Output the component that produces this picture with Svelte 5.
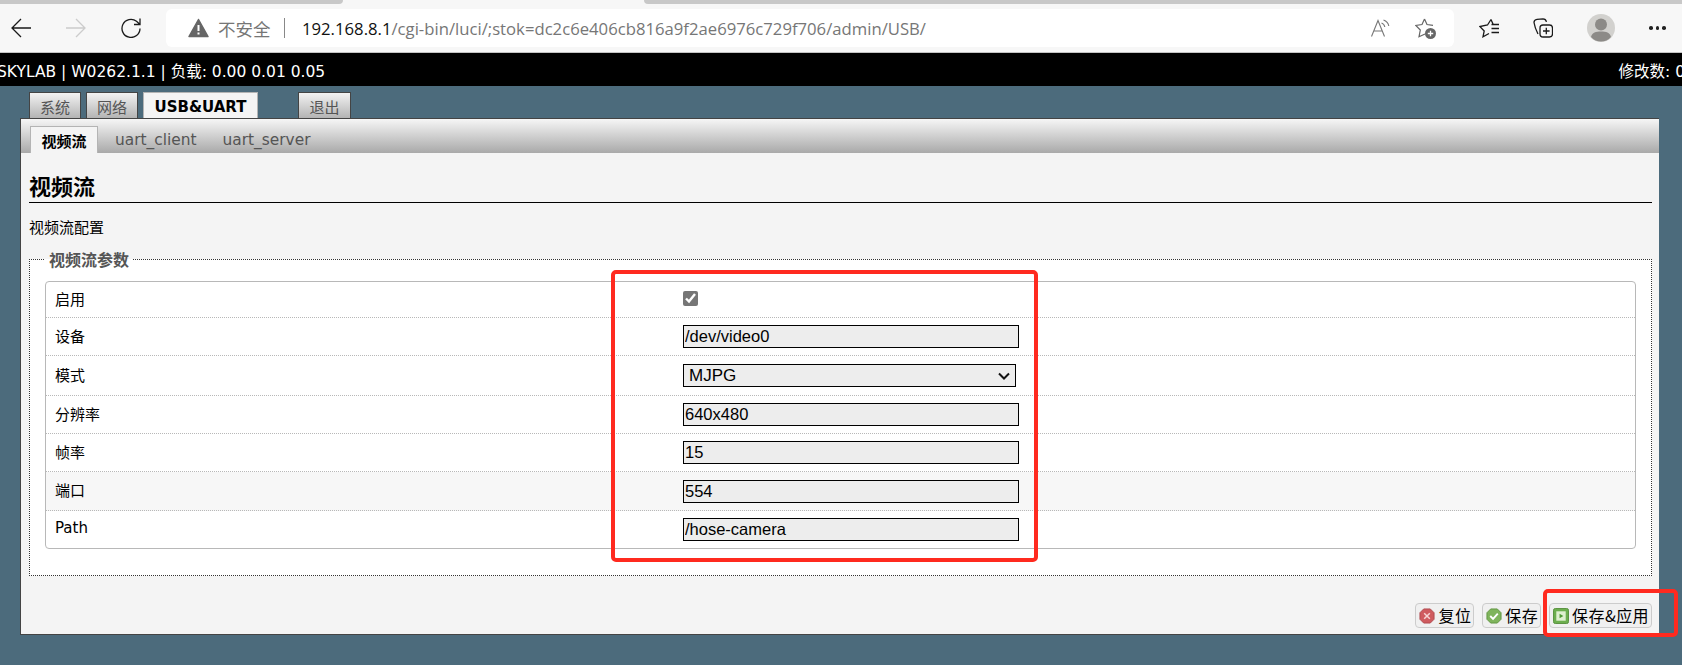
<script>
  const rows = [
    { label: '启用', type: 'check' },
    { label: '设备', type: 'text', value: '/dev/video0' },
    { label: '模式', type: 'select', value: 'MJPG' },
    { label: '分辨率', type: 'text', value: '640x480' },
    { label: '帧率', type: 'text', value: '15' },
    { label: '端口', type: 'text', value: '554' },
    { label: 'Path', type: 'text', value: '/hose-camera' }
  ];
</script>

<div class="page">
  <div class="strip">
    <div class="strip-a"></div>
    <div class="strip-b"></div>
    <div class="strip-c"></div>
  </div>

  <div class="toolbar">
    <div class="nav">
      <svg width="20" height="20" viewBox="0 0 20 20" fill="none" stroke="#1a1a1a" stroke-width="1.300"><path d="M20 10H1M10 1l-9 9 9 9" /></svg>
      <svg width="20" height="20" viewBox="0 0 20 20" fill="none" stroke="#cccccc" stroke-width="1.300"><path d="M0 10h19M10 1l9 9-9 9" /></svg>
      <svg width="20" height="20" viewBox="0 0 20 20" fill="none" stroke="#1a1a1a" stroke-width="1.300"><path d="M19 10.500a9 9 0 1 1-3.500-7.200l3 2.700M19 .5V6.500H13" /></svg>
    </div>
    <div class="address">
      <svg class="warn" width="21" height="20" viewBox="0 0 21 20"><path d="M10.500 1.500 20 18.500H1Z" fill="#666" stroke="#666" stroke-width="1.500" stroke-linejoin="round" /><path d="M10.500 7v6M10.500 14.500v2" stroke="#fff" stroke-width="2" /></svg>
      <span class="insecure">不安全</span>
      <span class="sep"></span>
      <span class="url"><b>192.168.8.1</b>/cgi-bin/luci/;stok=dc2c6e406cb816a9f2ae6976c729f706/admin/USB/</span>
      <svg class="read" width="19" height="18" viewBox="0 0 19 18" fill="none" stroke="#777" stroke-width="1.100"><path d="M.5 17.500 7 1.500l6.500 16M2.800 12h8.400M10.500 4c1.800.6 3 2 3.300 4M12.500 1c2.800 1 4.800 3 5.300 6" /></svg>
      <svg class="fav" width="22" height="21" viewBox="0 0 22 21"><path d="M9.500 1l2.500 5.500 6 .8M9.500 1 7 6.500.8 7.500l4.500 4.500L4 18.800l6-2.800" fill="none" stroke="#666" stroke-width="1.200" /><circle cx="15.500" cy="15.500" r="5.500" fill="#666" /><path d="M12.800 15.500h5.400M15.500 12.800v5.400" stroke="#fff" stroke-width="1.300" /></svg>
    </div>
    <div class="tools">
      <svg width="20" height="20" viewBox="0 0 20 20" fill="none" stroke="#1a1a1a" stroke-width="1.300"><path d="M12 1.500l2 4.500M12 1.500 8.500 7 .8 8.500 5.200 13 4 18.800 10 15.500M12.500 6.500h7.500M12.500 10.500h7.500M12.500 14.500h7.500" /></svg>
      <svg width="20" height="20" viewBox="0 0 20 20" fill="none" stroke="#1a1a1a" stroke-width="1.300"><path d="M5 16C3 12 1.500 8 1 4.500 1 2.500 2 1.500 4 1.300L10 .8c2 0 3 1 3.500 3" /><rect x="7" y="7" width="12.500" height="12" rx="3" /><path d="M13.300 9.700v6.600M10 13h6.600" /></svg>
      <svg width="28" height="28" viewBox="0 0 28 28"><circle cx="14" cy="14" r="14" fill="#d2d1ce" /><circle cx="14" cy="10.500" r="6" fill="#8c8a87" /><path d="M4 23c1-4.500 5-5.500 10-5.500S23 18.500 24 23c-5 6-15 6-20 0Z" fill="#8c8a87" /></svg>
      <span class="dots"><i></i><i></i><i></i></span>
    </div>
  </div>

  <header class="topbar">
    <span class="brand">SKYLAB | W0262.1.1 | 负载: 0.00 0.01 0.05</span>
    <span class="changes">修改数: 0</span>
  </header>

  <nav class="tabs">
    <a href="#a">系统</a>
    <a href="#a">网络</a>
    <a href="#a" class="active">USB&amp;UART</a>
    <a href="#a" class="logout">退出</a>
  </nav>

  <main class="panel">
    <div class="subtabs">
      <a href="#a" class="active">视频流</a>
      <a href="#a">uart_client</a>
      <a href="#a">uart_server</a>
    </div>

    <div class="content">
      <h2>视频流</h2>
      <p class="desc">视频流配置</p>

      <fieldset>
        <legend>视频流参数</legend>
        <div class="table">
          {#each rows as row, i}
            <div class="row" class:alt={i === 5}>
              <span class="label">{row.label}</span>
              {#if row.type === 'check'}
                <input type="checkbox" checked />
              {:else if row.type === 'select'}
                <select><option>{row.value}</option></select>
              {:else}
                <input type="text" value={row.value} />
              {/if}
            </div>
          {/each}
        </div>
      </fieldset>

      <div class="actions">
        <button>
          <svg width="16" height="16" viewBox="0 0 17 17"><path d="M5 1h7l4 4v7l-4 4H5l-4-4V5Z" fill="#cf5b5f" stroke="#b04a4e" /><path d="M5.500 5.500l6 6M11.500 5.500l-6 6" stroke="#f6d5d5" stroke-width="1.600" /></svg>
          复位
        </button>
        <button>
          <svg width="16" height="16" viewBox="0 0 17 17"><path d="M5 1h7l4 4v7l-4 4H5l-4-4V5Z" fill="#7fb45c" stroke="#5f9440" /><path d="M4.500 8.500l3 3 5-5.500" fill="none" stroke="#fff" stroke-width="2" /></svg>
          保存
        </button>
        <button>
          <svg width="16" height="16" viewBox="0 0 17 17"><rect x=".5" y=".5" width="16" height="16" rx="2" fill="#6cae4e" stroke="#558f3b" /><rect x="3.500" y="3.500" width="10" height="10" fill="#dff0d0" /><path d="M7 6l4 2.500L7 11Z" fill="#4f9a35" /></svg>
          保存&amp;应用
        </button>
      </div>
    </div>
  </main>

  <div class="mark mark-form"></div>
  <div class="mark mark-apply"></div>
</div>

<style>
  :global(body) {
    margin: 0;
    background: #4c6b7c;
  }

  .page {
    position: relative;
    height: 665px;
    overflow: hidden;
    background: #4c6b7c;
    font-family: "DejaVu Sans", "Noto Sans CJK SC", sans-serif;
    font-size: 14px;
  }

  a {
    text-decoration: none;
  }

  .strip {
    display: flex;
    height: 4px;
    background: #f7f7f7;
  }

  .strip-a {
    width: 343px;
    background: #c8c8c8;
    border-bottom-right-radius: 4px;
  }

  .strip-b {
    width: 301px;
    background: #f7f7f7;
  }

  .strip-c {
    flex: 1;
    background: #c8c8c8;
    border-bottom-left-radius: 4px;
  }

  .toolbar {
    display: flex;
    align-items: center;
    height: 48px;
    background: #f7f7f7;
    border-bottom: 1px solid #c4c4c4;
  }

  .nav {
    display: flex;
    align-items: center;
    gap: 35px;
    width: 166px;
    padding-left: 11px;
    box-sizing: border-box;
  }

  .address {
    display: flex;
    align-items: center;
    width: 1288px;
    height: 38px;
    background: #fff;
    border-radius: 6px;
    padding-left: 22px;
    box-sizing: border-box;
    font-family: "Open Sans", "Noto Sans CJK SC", sans-serif;
    font-size: 16.7px;
    color: #767676;
    white-space: nowrap;
  }

  .insecure {
    margin-left: 9px;
    font-size: 17.5px;
  }

  .sep {
    width: 1.5px;
    height: 20px;
    background: #888;
    margin: 0 17px 0 13px;
  }

  .url b {
    font-weight: 400;
    color: #111;
  }

  .read {
    margin-left: auto;
  }

  .fav {
    margin: 0 17px 0 25px;
  }

  .tools {
    display: flex;
    align-items: center;
    flex: 1;
    padding-left: 25px;
    gap: 34px;
  }

  .dots {
    display: flex;
    gap: 3px;
  }

  .dots i {
    width: 3.5px;
    height: 3.5px;
    border-radius: 50%;
    background: #222;
  }

  .topbar {
    display: flex;
    justify-content: space-between;
    align-items: center;
    height: 33px;
    background: #000;
    color: #fff;
    font-size: 15.5px;
    white-space: nowrap;
  }

  .brand {
    margin-left: -3px;
  }

  .changes {
    margin-right: -3px;
  }

  .tabs {
    display: flex;
    align-items: flex-end;
    gap: 5px;
    height: 26px;
    padding: 6px 0 0 29px;
    font-size: 15px;
  }

  .tabs a {
    height: 26px;
    width: 52px;
    box-sizing: border-box;
    display: flex;
    align-items: center;
    justify-content: center;
    padding-top: 2px;
    color: #555;
    border: 1px solid #444;
    border-bottom: 0;
    background: linear-gradient(#f2f2f2, #b4b4b4);
  }

  .tabs a.active {
    width: 115px;
    color: #000;
    font-weight: 700;
    background: #f4f4f4;
    border-color: #b4b4b4;
  }

  .tabs a.logout {
    margin-left: 35px;
    width: 53px;
  }

  .panel {
    width: 1639px;
    height: 517px;
    margin-left: 20px;
    box-sizing: border-box;
    background: #f4f4f4;
    border: 1px solid #444;
    border-right: 0;
  }

  .subtabs {
    display: flex;
    align-items: flex-end;
    height: 34px;
    padding-left: 9px;
    background: linear-gradient(#f6f6f6, #a9a9a9);
    font-size: 15.4px;
  }

  .subtabs a {
    display: flex;
    align-items: center;
    height: 27px;
    color: #555;
    padding: 1px 16px 0 0;
    margin-right: 10px;
    box-sizing: border-box;
  }

  .subtabs a.active {
    width: 68px;
    justify-content: center;
    padding: 1px 0 0;
    margin-right: 17px;
    color: #000;
    font-size: 15px;
    font-weight: 700;
    background: #f4f4f4;
    border: 1px solid #b4b4b4;
    border-bottom: 0;
  }

  .content {
    padding: 0 7px 0 8px;
  }

  h2 {
    margin: 0;
    padding-top: 21px;
    font-size: 22px;
    line-height: 28px;
    color: #000;
    border-bottom: 1px solid #000;
  }

  .desc {
    margin: 15px 0 0;
    font-size: 15px;
    line-height: 20px;
    color: #000;
  }

  fieldset {
    margin: 10px 0 0;
    padding: 11px 15px 26px;
    background: #fff;
    border: 1px dotted #333;
  }

  legend {
    padding: 4px 4px 0;
    font-size: 16px;
    line-height: 18px;
    font-weight: 700;
    color: #555;
  }

  .table {
    display: grid;
    grid-template-rows: 36px 38px 40px 38px 38px 39px 37px;
    border: 1px solid #b8b8b8;
    border-radius: 4px;
  }

  .row {
    display: grid;
    grid-template-columns: 637px 1fr;
    align-items: center;
    border-bottom: 1px dotted #b8b8b8;
  }

  .row:last-child {
    border-bottom: 0;
  }

  .row.alt {
    background: #f7f7f7;
  }

  .label {
    padding: 0 0 3px 9px;
    font-size: 15px;
    color: #000;
  }

  input[type='checkbox'] {
    width: 15px;
    height: 15px;
    margin: 0 0 3px;
    accent-color: #767676;
  }

  input[type='text'] {
    width: 336px;
    height: 23px;
    box-sizing: border-box;
    padding: 0 1px;
    background: #ededed;
    border: 1px solid #000;
    font-family: "Liberation Sans", sans-serif;
    font-size: 16.5px;
    color: #000;
  }

  select {
    width: 333px;
    height: 23px;
    box-sizing: border-box;
    padding: 0 0 0 5px;
    appearance: none;
    background: #ededed url("data:image/svg+xml,%3Csvg xmlns='http://www.w3.org/2000/svg' width='12' height='8'%3E%3Cpath d='M1 1.500l5 5 5-5' fill='none' stroke='%23111' stroke-width='2'/%3E%3C/svg%3E") no-repeat right 5px center;
    border: 1px solid #000;
    border-radius: 0;
    font-family: "Liberation Sans", sans-serif;
    font-size: 17px;
    color: #000;
  }

  .actions {
    display: flex;
    justify-content: flex-end;
    gap: 8px;
    margin-top: 27px;
  }

  button {
    display: flex;
    align-items: center;
    gap: 3px;
    height: 25px;
    padding: 0 2px 2px 3px;
    background: #f0f0f0;
    border: 1px solid #ccc;
    border-radius: 4px;
    font-family: "Noto Sans CJK SC", sans-serif;
    font-size: 16px;
    letter-spacing: .4px;
    color: #000;
  }

  button svg {
    margin-top: 2px;
  }

  .mark {
    position: absolute;
    box-sizing: border-box;
    border: 4px solid #ff2a1f;
    border-radius: 5px;
  }

  .mark-form {
    left: 611px;
    top: 270px;
    width: 427px;
    height: 292px;
  }

  .mark-apply {
    left: 1543px;
    top: 589px;
    width: 135px;
    height: 48px;
  }
</style>
